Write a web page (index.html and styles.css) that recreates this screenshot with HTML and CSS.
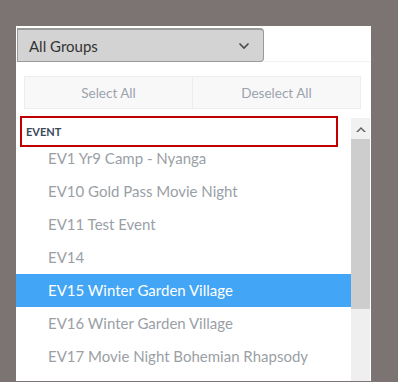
FILE: index.html
```html
<!DOCTYPE html>
<html lang="en">
<head>
    <meta charset="UTF-8">
    <meta name="viewport" content="width=device-width, initial-scale=1.0">
    <title>Group Picker</title>
    <link rel="stylesheet" href="styles.css">
</head>
<body>
    <div class="panel">
        <div class="panel-head">
            <div class="group-select">
                <span>All Groups</span>
                <svg class="chevron" width="12" height="8" viewBox="0 0 12 8">
                    <polyline points="1.5,1.5 6,6 10.5,1.5" fill="none" stroke="#4a4a4a" stroke-width="1.6"/>
                </svg>
            </div>
        </div>
        <div class="actions">
            <button class="action">Select All</button>
            <button class="action">Deselect All</button>
        </div>
        <div class="list-wrap">
            <div class="list">
                <div class="group-header">EVENT</div>
                <div class="item">EV1 Yr9 Camp - Nyanga</div>
                <div class="item">EV10 Gold Pass Movie Night</div>
                <div class="item">EV11 Test Event</div>
                <div class="item">EV14</div>
                <div class="item selected">EV15 Winter Garden Village</div>
                <div class="item">EV16 Winter Garden Village</div>
                <div class="item">EV17 Movie Night Bohemian Rhapsody</div>
            </div>
            <div class="scrollbar">
                <div class="scroll-up">
                    <svg width="10" height="6" viewBox="0 0 10 6">
                        <polygon points="0,6 5,1 10,6 8,6 5,3 2,6" fill="#5f5f5f"/>
                    </svg>
                </div>
                <div class="scroll-thumb"></div>
            </div>
        </div>
    </div>
</body>
</html>
```

FILE: styles.css
```css
body {
    margin: 0;
    background-color: #7c7373;
    font-family: Lato, "Open Sans", sans-serif;
    overflow: hidden;
}

.panel {
    margin: 26px 0 0 16px;
    width: 355px;
    height: 355px;
    background-color: #fff;
    overflow: hidden;
}

.panel-head {
    height: 36px;
    border-bottom: 1px solid #f3f3f3;
    box-sizing: border-box;
    padding-top: 2px;
}

.group-select {
    margin-left: 1px;
    width: 247px;
    height: 34px;
    box-sizing: border-box;
    display: flex;
    align-items: center;
    justify-content: space-between;
    padding: 0 11px 0 11px;
    background-color: #d3d3d3;
    border: 1px solid #9a9a9a;
    border-top-width: 2px;
    border-radius: 0 4px 4px 0;
    color: #333;
    font-size: 15px;
}

.chevron {
    margin-right: 2px;
}

.actions {
    display: flex;
    margin: 14px 10px 0 8px;
    height: 33px;
}

.action {
    flex: 1;
    background-color: #f8f8f8;
    border: 1px solid #ededed;
    color: #9ba3ad;
    font-family: Lato, sans-serif;
    font-size: 13.5px;
    padding: 0;
}

.action + .action {
    border-left: none;
}

.list-wrap {
    display: flex;
    margin-top: 7px;
    height: 265px;
}

.list {
    flex: 1;
}

.group-header {
    height: 31px;
    box-sizing: border-box;
    margin: 0 13px -5px 4px;
    border: 2px solid #c00000;
    padding-left: 4px;
    display: flex;
    align-items: center;
    font-size: 11px;
    font-weight: bold;
    color: #3a4a5c;
}

.item {
    height: 33px;
    line-height: 33px;
    padding-left: 32px;
    font-size: 15px;
    color: #9a9fa6;
    white-space: nowrap;
}

.item.selected {
    background-color: #42a5f5;
    color: #fff;
}

.scrollbar {
    width: 19px;
    margin: 2px 1px 0 0;
    background-color: #efefef;
}

.scroll-up {
    height: 21px;
    background-color: #f1f1f1;
    display: flex;
    align-items: center;
    justify-content: center;
}

.scroll-thumb {
    height: 170px;
    background-color: #cdcdcd;
}
```
